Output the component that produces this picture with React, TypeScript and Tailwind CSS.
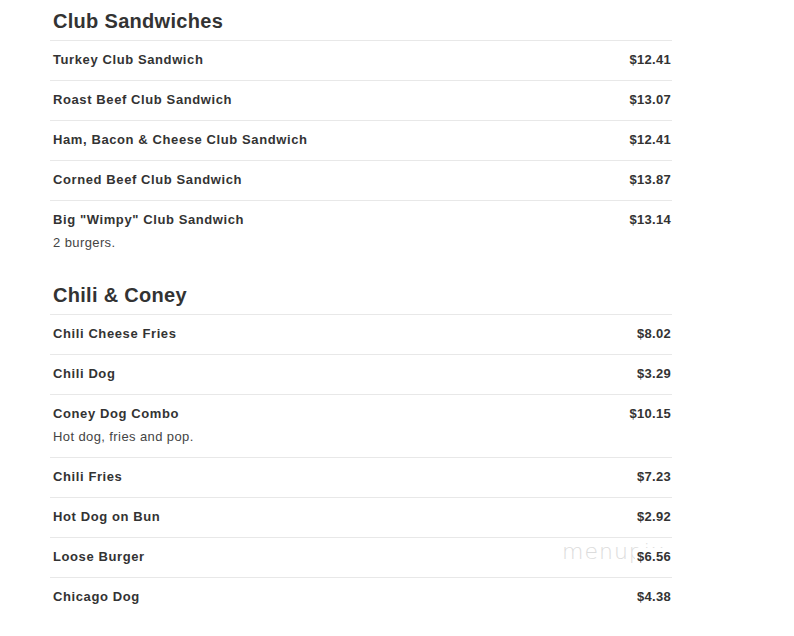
// Menu page: club sandwiches + chili & coney, with the faint watermark over one price
const SECTIONS = [
  {
    title: "Club Sandwiches",
    items: [
      { name: "Turkey Club Sandwich", price: "$12.41" },
      { name: "Roast Beef Club Sandwich", price: "$13.07" },
      { name: "Ham, Bacon & Cheese Club Sandwich", price: "$12.41" },
      { name: "Corned Beef Club Sandwich", price: "$13.87" },
      { name: 'Big "Wimpy" Club Sandwich', price: "$13.14", desc: "2 burgers." },
    ],
  },
  {
    title: "Chili & Coney",
    items: [
      { name: "Chili Cheese Fries", price: "$8.02" },
      { name: "Chili Dog", price: "$3.29" },
      { name: "Coney Dog Combo", price: "$10.15", desc: "Hot dog, fries and pop." },
      { name: "Chili Fries", price: "$7.23" },
      { name: "Hot Dog on Bun", price: "$2.92" },
      { name: "Loose Burger", price: "$6.56", mark: true },
      { name: "Chicago Dog", price: "$4.38" },
    ],
  },
];

type Item = { name: string; price: string; desc?: string; mark?: boolean };

function Row({ item }: { item: Item }) {
  return (
    <div className="relative border-t border-[#e8e8e8] pr-[1px] pl-[3px] pt-[10px] pb-[11px]">
      <div className="flex items-start justify-between text-[13px] leading-[18px] font-bold tracking-[0.6px] text-[#333]">
        <span>{item.name}</span>
        <span className="relative z-10 bg-white pl-[2px] tracking-[0.3px]">{item.price}</span>
      </div>
      {item.desc && (
        <p className="mt-[5px] text-[13px] leading-[18px] tracking-[0.4px] text-[#444]">{item.desc}</p>
      )}
      {item.mark && (
        <span className="absolute top-[3px] left-[512px] text-[22px] leading-[22px] font-extralight tracking-[1px] text-[#dcdcdc] [font-family:'DejaVu_Sans',sans-serif]">
          menupix
        </span>
      )}
    </div>
  );
}

export default function App() {
  return (
    <div className="min-h-screen bg-white" style={{ fontFamily: "'Liberation Sans', Arial, sans-serif" }}>
      <div className="ml-[50px] w-[622px] pt-[9px]">
        {SECTIONS.map((s, i) => (
          <section key={s.title} className={i > 0 ? "mt-[20px]" : ""}>
            <h2 className="mb-[7px] px-[3px] text-[20px] leading-[24px] font-bold tracking-[0.3px] text-[#333]">
              {s.title}
            </h2>
            {s.items.map((it) => (
              <Row key={it.name} item={it} />
            ))}
          </section>
        ))}
      </div>
    </div>
  );
}
